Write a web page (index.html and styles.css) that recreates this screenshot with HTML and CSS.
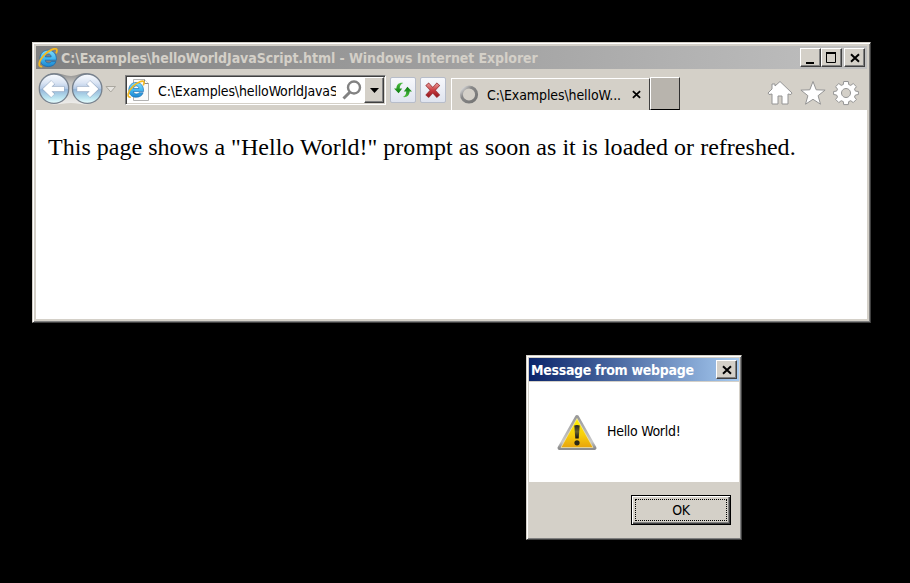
FILE: index.html
```html
<!DOCTYPE html>
<html lang="en">
<head>
<meta charset="utf-8">
<title>Hello World</title>
<link rel="stylesheet" href="styles.css">
</head>
<body>
<svg class="defs" width="0" height="0" aria-hidden="true">
  <defs>
    <linearGradient id="blue" x1="0" y1="0" x2="0" y2="1"><stop offset="0" stop-color="#7fdcfc"/><stop offset=".5" stop-color="#45b8f0"/><stop offset="1" stop-color="#1b86cf"/></linearGradient>
    <linearGradient id="orb" x1="0" y1="0" x2="0" y2="1"><stop offset="0" stop-color="#fafcff"/><stop offset=".3" stop-color="#dbe5f4"/><stop offset=".49" stop-color="#b5cae6"/><stop offset=".53" stop-color="#94b5d8"/><stop offset=".8" stop-color="#b9e2ef"/><stop offset="1" stop-color="#e8ffff"/></linearGradient>
    <linearGradient id="pill" x1="0" y1="0" x2="0" y2="1"><stop offset="0" stop-color="#8b8b8b"/><stop offset=".3" stop-color="#c4c2be"/><stop offset="1" stop-color="#efeeec"/></linearGradient>
    <linearGradient id="green" x1="0" y1="0" x2="0" y2="1"><stop offset="0" stop-color="#50bf44"/><stop offset="1" stop-color="#087a0c"/></linearGradient>
    <linearGradient id="red" x1="0" y1="0" x2="0" y2="1"><stop offset="0" stop-color="#e58b8b"/><stop offset=".5" stop-color="#c93c40"/><stop offset="1" stop-color="#9c1c25"/></linearGradient>
    <linearGradient id="yellow" x1="0" y1="0" x2="0" y2="1"><stop offset="0" stop-color="#fff200"/><stop offset=".55" stop-color="#f7cf0c"/><stop offset="1" stop-color="#e8a40c"/></linearGradient>
    <linearGradient id="silver" x1="0" y1="0" x2="0" y2="1"><stop offset="0" stop-color="#9a9a9a"/><stop offset=".8" stop-color="#c9c9c9"/><stop offset="1" stop-color="#8d8d8d"/></linearGradient>
    <linearGradient id="mark" x1="0" y1="0" x2="0" y2="1"><stop offset="0" stop-color="#222"/><stop offset=".5" stop-color="#666030"/><stop offset="1" stop-color="#111"/></linearGradient>
    <linearGradient id="ring" x1="0" y1="0" x2="1" y2="1"><stop offset="0" stop-color="#e8e8e8"/><stop offset=".35" stop-color="#888"/><stop offset="1" stop-color="#737373"/></linearGradient>
    <symbol id="ie" viewBox="0 0 20 20">
      <path d="M10.200 2.200C15.300 2.200 18.400 5.800 18.400 11.400v.8H7.200c.3 1.900 1.500 2.700 3.300 2.700 1.500 0 2.300-.5 2.800-1.300h4.600c-1 3.300-3.800 5-7.600 5-5 0-8.300-3.100-8.300-8.100 0-5 3.300-8.300 8.200-8.300ZM7.300 8.900h5.900c-.2-1.900-1.200-2.900-2.900-2.900-1.700 0-2.700 1-3 2.900Z" fill="url(#blue)" stroke="#1668ad" stroke-width=".7" fill-rule="evenodd"/>
      <path d="M4.200 18.600C-.8 19 .8 12.500 6.600 6.600 12 1.500 17.800-.6 18.800 1.700c.4 1.100 0 2.300-.7 3.700" fill="none" stroke="#f5b91f" stroke-width="1.800"/>
    </symbol>
    <symbol id="x" viewBox="0 0 10 10"><path d="M1 1.300 9 8.700M9 1.300 1 8.700" stroke="#000" stroke-width="2"/></symbol>
  </defs>
</svg>

<main class="window browser">
  <header class="titlebar">
    <svg class="ie-logo" width="20" height="20"><use href="#ie"/></svg>
    <h1 class="caption">C:\Examples\helloWorldJavaScript.html - Windows Internet Explorer</h1>
    <div class="controls">
      <button class="control" aria-label="Minimize"><svg width="17" height="16"><path d="M4 13h8" stroke="#000" stroke-width="2"/></svg></button>
      <button class="control" aria-label="Maximize"><svg width="17" height="16"><path d="M3.500 3v9.500h9V3" fill="none" stroke="#000"/><path d="M3 3h10" stroke="#000" stroke-width="2"/></svg></button>
      <button class="control close" aria-label="Close"><svg width="10" height="10"><use href="#x"/></svg></button>
    </div>
  </header>
  <nav class="toolbar">
    <svg class="travel" width="82" height="34" viewBox="0 0 82 34">
      <path d="M17 1C24 1 28 4 34 4S43 1 49 1A15.800 15.800 0 0 1 49 32.500C44 32.500 40 31 34 31s-12 1.500-17 1.500A15.800 15.800 0 0 1 17 1Z" fill="url(#pill)"/>
      <g fill="url(#orb)" stroke="#77818d" stroke-width="1.300"><circle cx="17" cy="16.700" r="14.700"/><circle cx="50.200" cy="16.700" r="14.700"/></g>
      <g fill="none" stroke="#94a7c0" stroke-width="5.600"><path d="M27.500 17H9M16 10.200 9 17l7 6.800"/><path d="M39.700 17h18.500M51.200 10.200l7 6.800-7 6.800"/></g>
      <g fill="none" stroke="#fff" stroke-width="4.500"><path d="M27 17H9M15.800 10.400 9 17l6.800 6.600"/><path d="M40.200 17h18M51.400 10.400l6.800 6.600-6.800 6.600"/></g>
      <path d="M69 14.500h9.500l-4.700 5.500Z" fill="#e6e4e0" stroke="#aaa79f"/>
    </svg>
    <div class="address">
      <svg class="page-icon" width="23" height="24"><path d="M6.500 1.500h11l4 4v17h-15Z" fill="#fafafa" stroke="#b2b2b2"/><path d="M17.500 1.500v4h4" fill="#fff" stroke="#888"/><use href="#ie" x="0" y="2" width="18" height="19"/></svg>
      <span class="url">C:\Examples\helloWorldJavaScript.html</span>
      <svg class="search" width="22" height="22"><circle cx="13" cy="8.500" r="6" fill="none" stroke="#828282" stroke-width="2.400"/><path d="M9 13 2.500 19.500" stroke="#828282" stroke-width="3"/></svg>
      <button class="drop" aria-label="Show addresses"><svg width="9" height="5"><path d="M0 0h9L4.500 5Z"/></svg></button>
    </div>
    <button class="action" aria-label="Refresh"><svg width="20" height="20" viewBox="0 0 20 20"><path id="arrow" d="M1 8.500 5.600 13.200 9.200 8.500H6.700C6.800 5.500 8 3.700 10.300 3 6.300 2.300 3.500 4.500 3.400 8.500Z" fill="url(#green)"/><use href="#arrow" transform="rotate(180 10 10)"/></svg></button>
    <button class="action stop" aria-label="Stop"><svg width="20" height="20"><path d="m4 4 11.500 12.500M15.500 4 4 16.500" stroke="#9d3a3e" stroke-width="4.600"/><path d="m4.500 4.500 10.500 11.500M15 4.500 4.500 16" stroke="url(#red)" stroke-width="3.300"/></svg></button>
    <div class="tab">
      <svg width="20" height="20"><circle cx="10" cy="9.500" r="7.600" fill="none" stroke="url(#ring)" stroke-width="3"/></svg>
      <span class="tab-name">C:\Examples\helloW...</span>
      <svg class="tab-close" width="9" height="9"><use href="#x"/></svg>
    </div>
    <button class="new-tab" aria-label="New tab"></button>
    <div class="commands">
      <svg width="26" height="26"><path d="M13 1.500 25 13l-1 1.500-3-.5v10h-6v-8h-4v8H5V14l-3 .5L1 13 5 9V4h3v2Z" fill="#fff" stroke="#949494"/></svg>
      <svg width="26" height="26"><path d="m13 1.500 3.200 8.300 8.900.300-7 5.600 2.400 8.500L13 19.300l-7.500 4.900 2.400-8.500-7-5.600 8.900-.3Z" fill="#fff" stroke="#949494"/></svg>
      <svg width="26" height="26" viewBox="-13 -13 26 26"><path fill="#fff" stroke="#949494" fill-rule="evenodd" d="M-2.300-11.500h4.600l.4 3 2.100.9 2.400-1.900 3.200 3.200-1.900 2.400.9 2 3 .4v3l-3 .5-.9 2 1.900 2.400-3.200 3.200-2.400-1.900-2.100.9-.4 3h-4.600l-.4-3-2.100-.9-2.400 1.900-3.200-3.200 1.900-2.400-.9-2-3-.5v-3l3-.4.9-2-1.900-2.400 3.200-3.200 2.400 1.900 2.100-.9ZM0-4.500a4.500 4.500 0 1 0 .01 0Z"/></svg>
    </div>
  </nav>
  <article class="page"><p>This page shows a "Hello World!" prompt as soon as it is loaded or refreshed.</p></article>
</main>

<section class="window dialog" role="dialog" aria-labelledby="dialog-title">
  <header class="titlebar active">
    <h2 class="caption" id="dialog-title">Message from webpage</h2>
    <button class="control" aria-label="Close"><svg width="10" height="10"><use href="#x"/></svg></button>
  </header>
  <div class="message">
    <svg width="42" height="38" viewBox="0 0 42 38"><path d="M21 3 38.500 34H3.500Z" fill="url(#yellow)" stroke="url(#silver)" stroke-width="4" stroke-linejoin="round"/><path d="M21 4.500 37 33.500H5Z" fill="url(#yellow)" stroke="#f4e9b2" stroke-width=".7"/><path d="M18.300 11.500q2.700-1 5.400 0L22.700 24.500h-3.400Z" fill="url(#mark)"/><circle cx="21" cy="28.800" r="2.600" fill="#292716"/></svg>
    <span class="message-text">Hello World!</span>
  </div>
  <footer class="footer"><button class="ok"><span>OK</span></button></footer>
</section>
</body>
</html>
```
FILE: styles.css
```css
* { box-sizing: border-box; }
body {
  margin: 0;
  height: 583px;
  overflow: hidden;
  background: #000;
  font: 14px "DejaVu Sans Condensed", "DejaVu Sans", sans-serif;
  font-stretch: condensed;
}
.defs { position: absolute; }
svg { display: block; flex: none; }
button { margin: 0; padding: 0; font: inherit; flex: none; }
.window {
  position: absolute;
  display: flex;
  flex-direction: column;
  background: #d4d0c8;
  border: 1px solid;
  border-color: #d4d0c8 #404040 #404040 #d4d0c8;
  box-shadow: inset 1px 1px #fff, inset -1px -1px #808080;
}
.browser { left: 32px; top: 42px; width: 839px; height: 281px; padding: 3px; }
.dialog { left: 526px; top: 355px; width: 216px; height: 185px; padding: 2px; }
.titlebar {
  display: flex;
  align-items: center;
  height: 23px;
  flex: none;
  padding: 0 2px;
  background: linear-gradient(90deg, #808080, #c0c0c0);
  color: #d4d0c8;
}
.active { background: linear-gradient(90deg, #0a246a, #a6caf0); color: #fff; }
.caption { flex: 1; margin: 0; padding-top: 1px; font-size: 14px; line-height: 22px; font-weight: bold; white-space: nowrap; letter-spacing: -.07px; }
.active .caption { letter-spacing: -.3px; }
.ie-logo { margin-right: 3px; }
.controls { display: flex; }
.control {
  display: flex;
  align-items: center;
  justify-content: center;
  width: 21px;
  height: 19px;
  background: #d4d0c8;
  border: 1px solid;
  border-color: #fff #404040 #404040 #fff;
  box-shadow: inset -1px -1px #808080;
}
.close { margin-left: 2px; }
.toolbar { display: flex; height: 41px; flex: none; align-items: flex-start; padding-left: 1px; }
.travel { margin-top: 3px; }
.address {
  display: flex;
  align-items: center;
  width: 261px;
  height: 30px;
  margin: 6px 4px 0 6px;
  padding: 1px;
  background: #fff;
  border: 1px solid;
  border-color: #808080 #fff #fff #808080;
  box-shadow: inset 1px 1px #404040, inset -1px -1px #d4d0c8;
}
.page-icon { margin-left: 0; }
.url { width: 178px; margin-left: 8px; padding-top: 1px; overflow: hidden; white-space: nowrap; letter-spacing: -.15px; line-height: 22px; }
.search { margin-left: 5px; }
.drop {
  display: flex;
  align-items: center;
  justify-content: center;
  width: 20px;
  height: 26px;
  margin-left: auto;
  background: #d4d0c8;
  border: 1px solid;
  border-color: #fff #404040 #404040 #fff;
  box-shadow: inset -1px -1px #808080;
}
.action {
  display: flex;
  align-items: center;
  justify-content: center;
  width: 26px;
  height: 26px;
  margin-top: 8px;
  border: 1px solid #b7bdca;
  border-radius: 2px;
  background: linear-gradient(#f7f8fc, #dfe4ef);
}
.stop { margin-left: 4px; }
.tab {
  display: flex;
  align-items: center;
  width: 199px;
  height: 32px;
  margin: 9px 0 0 5px;
  padding-left: 7px;
  border: 1px solid;
  border-color: #fff #404040 transparent #fff;
  border-bottom: 0;
}
.tab-name { width: 142px; margin-left: 8px; white-space: nowrap; letter-spacing: -.1px; }
.tab-close { margin-left: 3px; }
.new-tab {
  width: 30px;
  height: 33px;
  margin-top: 8px;
  background: #b8b4ad;
  border: 1px solid;
  border-color: #fff #303030 #000 #fff;
}
.commands { display: flex; gap: 7px; margin: 11px 8px 0 auto; }
.page { flex: 1; padding: 24px 12px; background: #fff; }
.page p { margin: 0; font: 24px/27px "Liberation Serif", serif; white-space: nowrap; letter-spacing: .025px; }
.message {
  display: flex;
  align-items: center;
  height: 100px;
  margin-top: 1px;
  padding: 2px 0 0 27px;
  background: #fff;
}
.message-text { margin: -4px 0 0 9px; letter-spacing: -.3px; white-space: nowrap; }
.footer { display: flex; justify-content: flex-end; padding: 13px 8px 0 0; }
.ok {
  width: 100px;
  height: 30px;
  padding: 2px;
  background: #d4d0c8;
  border: 1px solid #000;
  box-shadow: inset 1px 1px #fff, inset -1px -1px #404040, inset -2px -2px #808080;
}
.ok span { display: block; height: 22px; margin: 1px; line-height: 20px; border: 1px dotted #000; letter-spacing: -.3px; }
```
